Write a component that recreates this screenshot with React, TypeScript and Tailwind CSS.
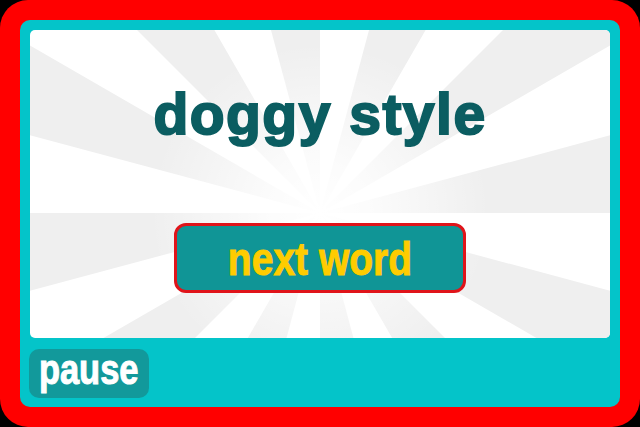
import React from 'react';

const CX = 290;
const CY = 183;
const R = 900;

function rayPoints(k: number): string {
  const a0 = (k * 15 * Math.PI) / 180;
  const a1 = ((k + 1) * 15 * Math.PI) / 180;
  const x0 = CX + R * Math.cos(a0);
  const y0 = CY - R * Math.sin(a0);
  const x1 = CX + R * Math.cos(a1);
  const y1 = CY - R * Math.sin(a1);
  return `${CX},${CY} ${x0},${y0} ${x1},${y1}`;
}

function Sunburst() {
  const rays = Array.from({ length: 12 }, (_, i) => i * 2);
  return (
    <svg
      className="absolute inset-0"
      width="580"
      height="308"
      viewBox="0 0 580 308"
    >
      <defs>
        <radialGradient id="fade" cx={CX} cy={CY} r="170" gradientUnits="userSpaceOnUse">
          <stop offset="0" stopColor="#ffffff" stopOpacity="1" />
          <stop offset="0.3" stopColor="#ffffff" stopOpacity="0.8" />
          <stop offset="1" stopColor="#ffffff" stopOpacity="0" />
        </radialGradient>
      </defs>
      <rect width="580" height="308" fill="#ffffff" />
      {rays.map((k) => (
        <polygon key={k} points={rayPoints(k)} fill="#efefef" />
      ))}
      <rect width="580" height="308" fill="url(#fade)" />
    </svg>
  );
}

const sans = { fontFamily: '"Liberation Sans", Arial, sans-serif' };

export default function App() {
  return (
    <div className="w-[640px] h-[427px] bg-black">
      <div className="w-full h-full bg-[#ff0000] rounded-[28px] p-5">
        <div className="h-full bg-[#04c4c9] rounded-[10px] flex flex-col">
          <div className="relative mx-[10px] mt-[10px] h-[308px] rounded-[5px] overflow-hidden flex flex-col items-center">
            <Sunburst />
            <h1
              className="relative mt-[56px] text-[57px] leading-none font-bold tracking-[1.5px] text-[#0b5d61] [-webkit-text-stroke:2px_#0b5d61]"
              style={sans}
            >
              doggy style
            </h1>
            <button
              className="relative mt-[80px] w-[292px] h-[70px] rounded-[12px] border-[3px] border-[#e0141a] bg-[#109596] flex items-center justify-center"
            >
              <span
                className="inline-block whitespace-nowrap scale-x-[0.83] text-[47px] leading-none font-bold text-[#ffcc00] [-webkit-text-stroke:1px_#ffcc00]"
                style={sans}
              >
                next word
              </span>
            </button>
          </div>
          <div className="flex px-[9px] pt-[11px]">
            <button className="w-[120px] h-[49px] pb-2 rounded-[10px] bg-[#12999b] flex items-center justify-center">
              <span
                className="inline-block whitespace-nowrap scale-x-[0.82] text-[42px] leading-none font-bold text-white [-webkit-text-stroke:1px_#ffffff]"
                style={sans}
              >
                pause
              </span>
            </button>
          </div>
        </div>
      </div>
    </div>
  );
}
